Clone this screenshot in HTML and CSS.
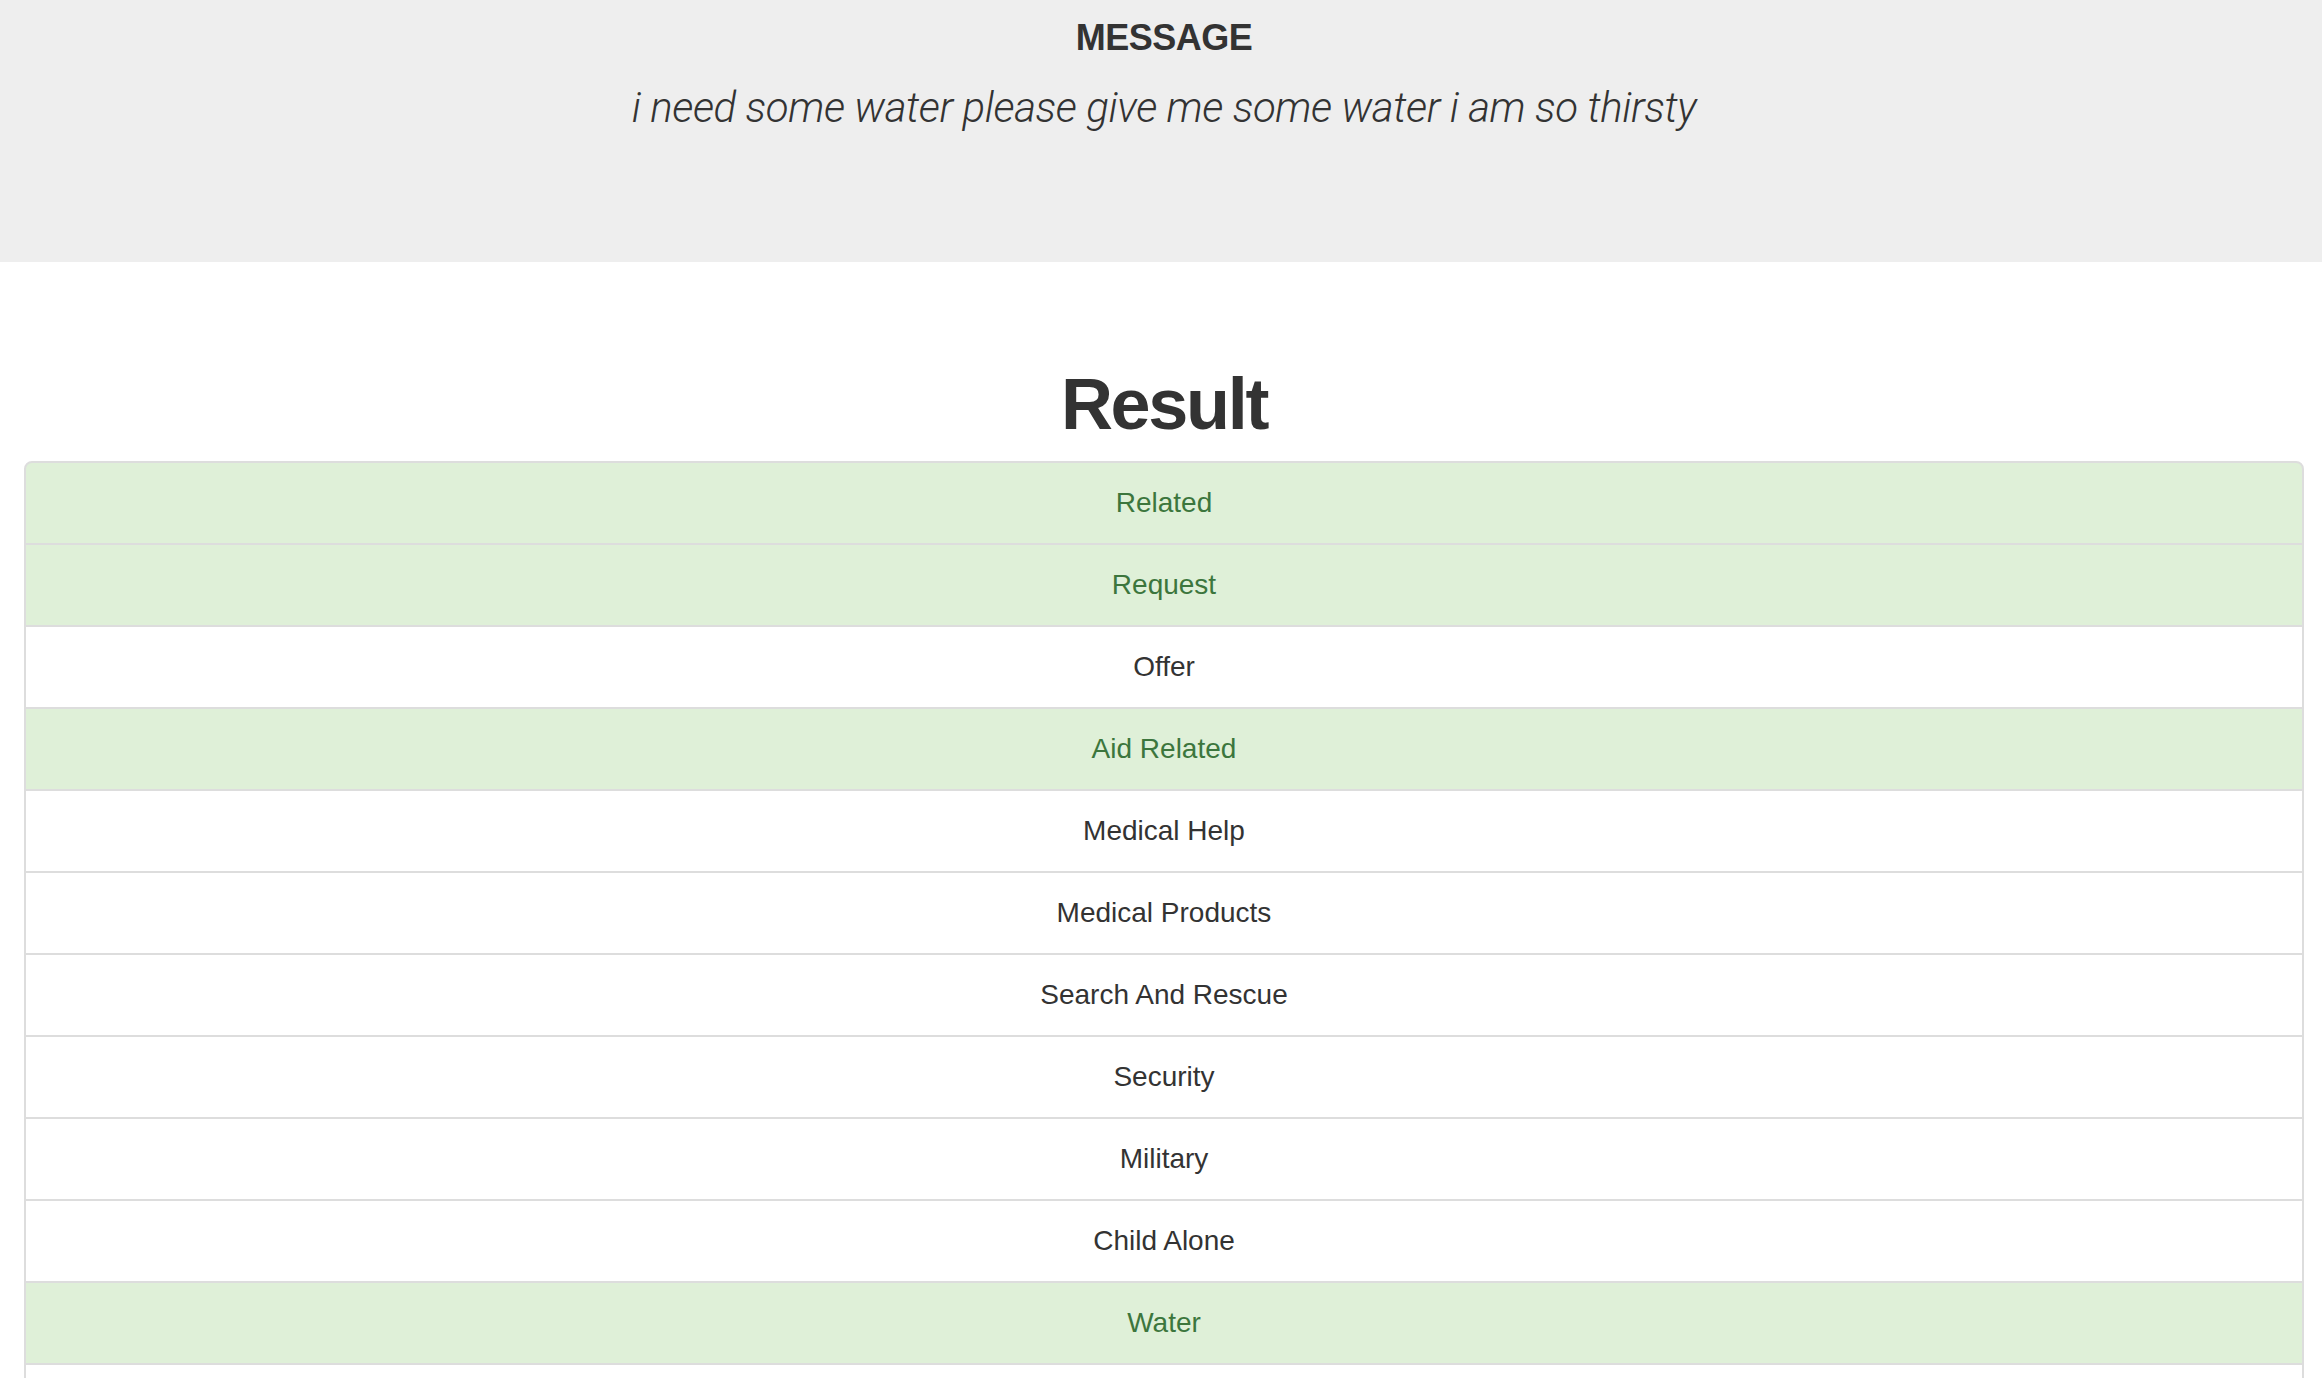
FILE: index.html
```html
<!DOCTYPE html>
<html lang="en">
<head>
<meta charset="utf-8">
<title>Disaster Response Result</title>
<link rel="stylesheet" href="styles.css">
</head>
<body>
<header class="jumbotron">
  <h4 class="msg-title">MESSAGE</h4>
  <p class="msg-text">i need some water please give me some water i am so thirsty</p>
</header>
<main class="content">
  <h1 class="result-title">Result</h1>
  <ul class="list-group">
    <li class="list-group-item success">Related</li>
    <li class="list-group-item success">Request</li>
    <li class="list-group-item">Offer</li>
    <li class="list-group-item success">Aid Related</li>
    <li class="list-group-item">Medical Help</li>
    <li class="list-group-item">Medical Products</li>
    <li class="list-group-item">Search And Rescue</li>
    <li class="list-group-item">Security</li>
    <li class="list-group-item">Military</li>
    <li class="list-group-item">Child Alone</li>
    <li class="list-group-item success">Water</li>
    <li class="list-group-item">Food</li>
  </ul>
</main>
</body>
</html>
```
FILE: styles.css
```css
html, body {
  margin: 0;
  padding: 0;
  background: #fff;
  color: #333;
  font-family: "Liberation Sans", Arial, sans-serif;
}

.jumbotron {
  background: #eee;
  height: 262px;
  box-sizing: border-box;
  padding: 18px 18px 0 24px;
  text-align: center;
}

.msg-title {
  margin: 0;
  font-size: 36px;
  line-height: 40px;
  font-weight: 700;
  color: #333;
  letter-spacing: -0.5px;
}

.msg-text {
  margin: 21px 0 0;
  font-family: Roboto, "Liberation Sans", sans-serif;
  font-size: 42px;
  line-height: 58px;
  font-weight: 300;
  font-style: italic;
  letter-spacing: -0.4px;
  color: #333;
}

.content {
  padding: 0 18px 40px 24px;
}

.result-title {
  margin: 102px 0 17px;
  text-align: center;
  font-size: 72px;
  line-height: 80px;
  font-weight: 700;
  letter-spacing: -2.3px;
  color: #333;
}

.list-group {
  list-style: none;
  margin: 0;
  padding: 0;
}

.list-group-item {
  display: block;
  padding: 20px 30px;
  margin-bottom: -2px;
  border: 2px solid #ddd;
  background: #fff;
  color: #333;
  font-size: 28px;
  line-height: 40px;
  text-align: center;
}

.list-group-item:first-child {
  border-top-left-radius: 8px;
  border-top-right-radius: 8px;
}

.list-group-item:last-child {
  margin-bottom: 0;
  border-bottom-left-radius: 8px;
  border-bottom-right-radius: 8px;
}

.list-group-item.success {
  background: #dff0d8;
  color: #3c763d;
}
```
